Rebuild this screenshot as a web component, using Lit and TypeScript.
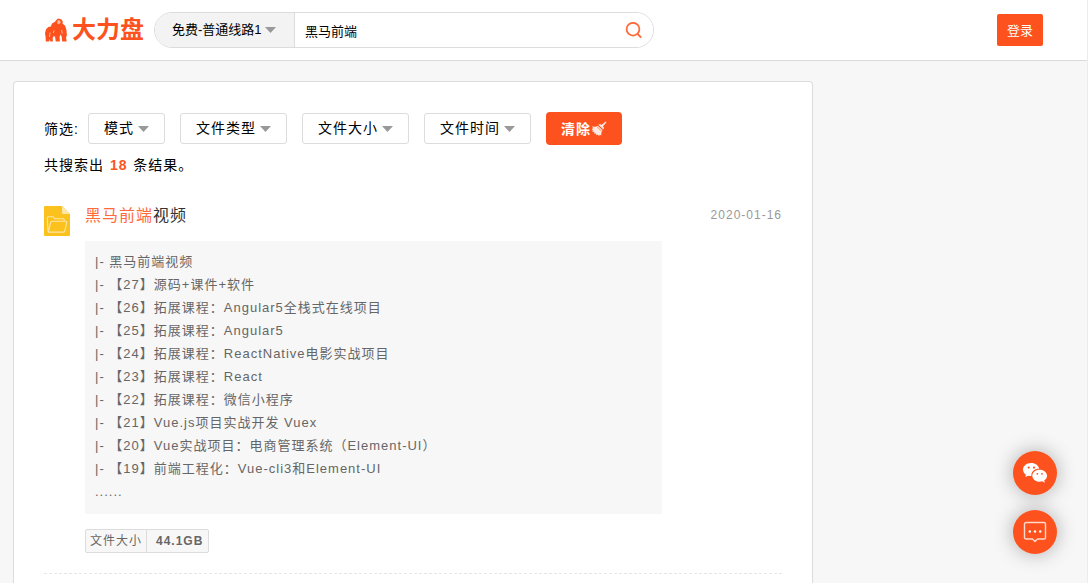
import { LitElement, html, css } from "lit";
import { customElement } from "lit/decorators.js";

const LINES = [
  "黑马前端视频",
  "【27】源码+课件+软件",
  "【26】拓展课程：Angular5全栈式在线项目",
  "【25】拓展课程：Angular5",
  "【24】拓展课程：ReactNative电影实战项目",
  "【23】拓展课程：React",
  "【22】拓展课程：微信小程序",
  "【21】Vue.js项目实战开发 Vuex",
  "【20】Vue实战项目：电商管理系统（Element-UI）",
  "【19】前端工程化：Vue-cli3和Element-UI",
];

const FILTERS = ["模式", "文件类型", "文件大小", "文件时间"];

@customElement("app-root")
export class AppRoot extends LitElement {
  static styles = css`
    :host {
      box-sizing: border-box;
      display: flex;
      flex-direction: column;
      min-height: 100vh;
      border-right: 1px solid #ececec;
      background: #f7f7f7;
      color: #000;
      font-family: "Liberation Sans", "Noto Sans CJK SC", sans-serif;
      font-size: 14px;
    }
    * {
      box-sizing: border-box;
    }
    button,
    input,
    select {
      font: inherit;
      letter-spacing: inherit;
      color: inherit;
      margin: 0;
      border: 0;
      outline: 0;
    }
    button,
    select {
      cursor: pointer;
    }
    select {
      appearance: none;
      background: url("data:image/svg+xml,%3Csvg xmlns='http://www.w3.org/2000/svg' width='11' height='6'%3E%3Cpath d='M0 0h11L5.5 6z' fill='%23999'/%3E%3C/svg%3E")
        no-repeat right 15px center;
    }
    .header {
      display: flex;
      align-items: center;
      height: 61px;
      padding: 0 44px 0 45px;
      background: #fff;
      border-bottom: 1px solid #dcdcdc;
    }
    .logo {
      display: flex;
      align-items: center;
      gap: 5px;
      margin-right: 10px;
      color: #fd521d;
      font-size: 24px;
      font-weight: 700;
      line-height: 32px;
      text-decoration: none;
    }
    .search {
      display: flex;
      flex: 0 1 500px;
      height: 36px;
      border: 1px solid #dcdcdc;
      border-radius: 18px;
      overflow: hidden;
      font-size: 13px;
    }
    .route {
      flex: none;
      width: 140px;
      padding: 0 30px 2px 17px;
      background-color: #f3f3f3;
      background-position: right 18px center;
      border-right: 1px solid #dcdcdc;
    }
    .query {
      flex: 1;
      min-width: 0;
      padding: 0 10px;
      background: #fff;
    }
    .go {
      display: flex;
      align-items: center;
      padding: 0 11px 0 10px;
      background: #fff;
      color: #ff6a3a;
    }
    .login {
      margin-left: auto;
      width: 46px;
      height: 32px;
      padding: 0 0 2px;
      border-radius: 2px;
      background: #fd521d;
      color: #fff;
      font-size: 13px;
    }
    .main {
      flex: 1;
      display: flex;
      padding: 20px 13px 0;
    }
    .card {
      flex: 0 1 800px;
      padding: 30px 30px 0;
      background: #fff;
      border: 1px solid #dcdcdc;
      border-bottom: 0;
      border-radius: 4px 4px 0 0;
      letter-spacing: 1px;
    }
    .filters {
      display: flex;
      flex-wrap: wrap;
      align-items: center;
      gap: 15px;
      line-height: 20px;
    }
    .label {
      margin-right: -6px;
    }
    .filter {
      height: 31px;
      padding: 0 30px 2px 15px;
      border: 1px solid #dcdcdc;
      border-radius: 3px;
    }
    .clear {
      display: flex;
      align-items: center;
      height: 33px;
      padding: 0 15px;
      border-radius: 4px;
      background: #fd521d;
      color: #fff;
      font-weight: 700;
    }
    .count {
      margin: 10px 0 0;
      line-height: 20px;
    }
    .num {
      margin: 0 1px;
      color: #fd521d;
    }
    .item {
      display: grid;
      grid-template-columns: 26px 1fr;
      column-gap: 15px;
      margin-top: 30px;
      padding-bottom: 20px;
      border-bottom: 1px dashed #e6e6e6;
    }
    .file {
      display: block;
      margin-top: 1px;
    }
    .head {
      display: flex;
      justify-content: space-between;
      height: 36px;
    }
    .title {
      margin: 0;
      font-size: 16px;
      font-weight: 400;
      line-height: 22px;
    }
    .link {
      color: #333;
      text-decoration: none;
    }
    .hit {
      color: #ff6a3a;
    }
    .date {
      color: #999;
      font-size: 12px;
      line-height: 20px;
    }
    .list {
      margin: 0 120px 0 0;
      padding: 9px 10px 11px;
      background: #f7f7f7;
      color: #666;
      font-size: 13px;
      line-height: 23px;
      list-style: none;
    }
    .tag {
      display: inline-flex;
      margin-top: 15px;
      height: 24px;
      border: 1px solid #dcdcdc;
      border-radius: 2px;
      background: #f7f7f7;
      color: #666;
      font-size: 12px;
      line-height: 22px;
    }
    .key {
      padding: 0 4px;
      border-right: 1px solid #dcdcdc;
    }
    .value {
      padding: 0 5px 0 9px;
      font-weight: 700;
    }
    .float {
      position: fixed;
      right: 31px;
      bottom: 29px;
      display: grid;
      gap: 15px;
    }
    .round {
      display: grid;
      place-items: center;
      width: 44px;
      height: 44px;
      padding: 0;
      border-radius: 50%;
      background: #fd521d;
      box-shadow: 0 0 20px rgba(0, 0, 0, 0.3);
      color: #fff;
    }
  `;

  render() {
    return html`
      <header class="header">
        <a class="logo" href="#">
          <svg width="22" height="24" viewBox="0 0 22 24" fill="currentColor" aria-hidden="true">
            <path d="M11 2.2 13 .6l3.2.6 1.6 2.2-.3 2.2 2.6 2.2 1.300 4 .5 5.200-.8 2.400.5 4.200h-4.400l-.6-5-1-2-1 2.200.3 4.800h-4.200l-.6-5-1.400-.4-1 1.600.2 3.800H5.300L4.900 21l-.7 2.600H.8L.6 19 0 15.500l1-4.200L3.400 9l2.400-.6L7 5.600l3-1.800z" />
            <path d="m12.200 2.900 1.300-.8 1.900 1 .2 1.700-1.500 1.500-1.700-.5z" fill="#ffb69e" />
            <path d="M5 14.500l-.5 4.500M9 12.500l-.6 2.500M16.600 12l.7 3.600" fill="none" stroke="#ffc9b8" stroke-width=".8" />
          </svg>
          <span>大力盘</span>
        </a>
        <form class="search" @submit=${(e: Event) => e.preventDefault()}>
          <select class="route" aria-label="线路"><option>免费-普通线路1</option></select>
          <input class="query" type="text" aria-label="搜索" .value=${"黑马前端"} />
          <button class="go" aria-label="搜索">
            <svg width="17" height="17" viewBox="0 0 17 17" fill="none" stroke="currentColor" stroke-width="1.8" stroke-linecap="round">
              <circle cx="8" cy="7.2" r="6.4" /><path d="m12.6 12 3 3" />
            </svg>
          </button>
        </form>
        <button class="login">登录</button>
      </header>
      <main class="main">
        <section class="card">
          <div class="filters">
            <span class="label">筛选:</span>
            ${FILTERS.map((f) => html`<select class="filter" aria-label=${f}><option>${f}</option></select>`)}
            <button class="clear">
              清除<svg width="16" height="16" viewBox="0 0 16 16" fill="#ffe9e1" aria-hidden="true">
                <path d="m14.8.5.7.7-3.6 4.3 1.2 1.3-.8 1.8-4.9-4.8L9.2 3l1.2 1.1z" />
                <path d="m6.8 4.7 4.7 4.6-1.1 2.3-.2 2.9-1.5-.9-.5 1.6-1.5-1.6-1.2.6-.6-1.8-1.9.2.4-1.7L1 10.5l1-1.2L.5 8.1l1.8-.8L.8 5.5l3.2.2z" />
                <path d="M10.500 10.200l-5-5" fill="none" stroke="#fd521d" stroke-width=".6" />
              </svg>
            </button>
          </div>
          <p class="count">共搜索出 <b class="num">18</b> 条结果。</p>
          <article class="item">
            <svg class="file" width="26" height="30" viewBox="0 0 26 30" aria-hidden="true">
              <path d="M1 0h17l8 8v21a1 1 0 0 1-1 1H1a1 1 0 0 1-1-1V1a1 1 0 0 1 1-1z" fill="#fbc11c" />
              <path d="M18 0l8 8h-7a1 1 0 0 1-1-1z" fill="#fde6a6" />
              <path d="M4 25 3.3 11.7q0-1 1-1h4.5l2 2h8.4q1 0 1 1v1.6M4.2 26l2.500-9.800q.3-.9 1.200-.9h13.800q1.200 0 1 1l-2 8.900q-.2.9-1.200.9H4.600z" fill="none" stroke="#fde6a6" stroke-width="1.1" stroke-linejoin="round" />
            </svg>
            <div>
              <div class="head">
                <h3 class="title"><a class="link" href="#"><span class="hit">黑马前端</span>视频</a></h3>
                <time class="date">2020-01-16</time>
              </div>
              <ul class="list">
                ${LINES.map((l) => html`<li>|- ${l}</li>`)}
                <li>......</li>
              </ul>
              <div class="tag"><span class="key">文件大小</span><span class="value">44.1GB</span></div>
            </div>
          </article>
        </section>
      </main>
      <aside class="float">
        <button class="round" aria-label="微信">
          <svg width="26" height="22" viewBox="0 0 26 22" fill="currentColor">
            <path d="M9.3 1C4.5 1 1 3.9 1 7.6c0 2.2 1.2 4 3 5.2L3.2 15l3.1-1.3q1.5.4 3.1.4C9 9.3 12.7 6.7 17.2 6.8 16.5 3.4 13.2 1 9.3 1z" />
            <path d="M17.7 7.7c-4.2 0-7.4 2.7-7.4 6s3.2 6 7.4 6q1.3 0 2.5-.4l2.7 1.400-.7-2.300c1.700-1.100 2.800-2.800 2.800-4.700 0-3.300-3.200-6-7.300-6z" />
            <g fill="#fd521d"><circle cx="6.7" cy="5.6" r="1.1" /><circle cx="12" cy="5.6" r="1.1" /><circle cx="15.3" cy="11.8" r=".9" /><circle cx="20" cy="11.8" r=".9" /></g>
          </svg>
        </button>
        <button class="round" aria-label="留言">
          <svg width="24" height="22" viewBox="0 0 24 22" fill="none" stroke="#ffd9cb" stroke-width="1.4" stroke-linejoin="round">
            <path d="M3 1.5h18q1.500 0 1.500 1.500v13.500q0 1.500-1.500 1.500h-6.500L12 20.500 9.500 18H3q-1.500 0-1.500-1.500V3q0-1.500 1.500-1.500z" />
            <g fill="#fff" stroke="none"><circle cx="6.8" cy="10.5" r="1.2" /><circle cx="12" cy="10.5" r="1.2" /><circle cx="17.2" cy="10.5" r="1.2" /></g>
          </svg>
        </button>
      </aside>
    `;
  }
}
